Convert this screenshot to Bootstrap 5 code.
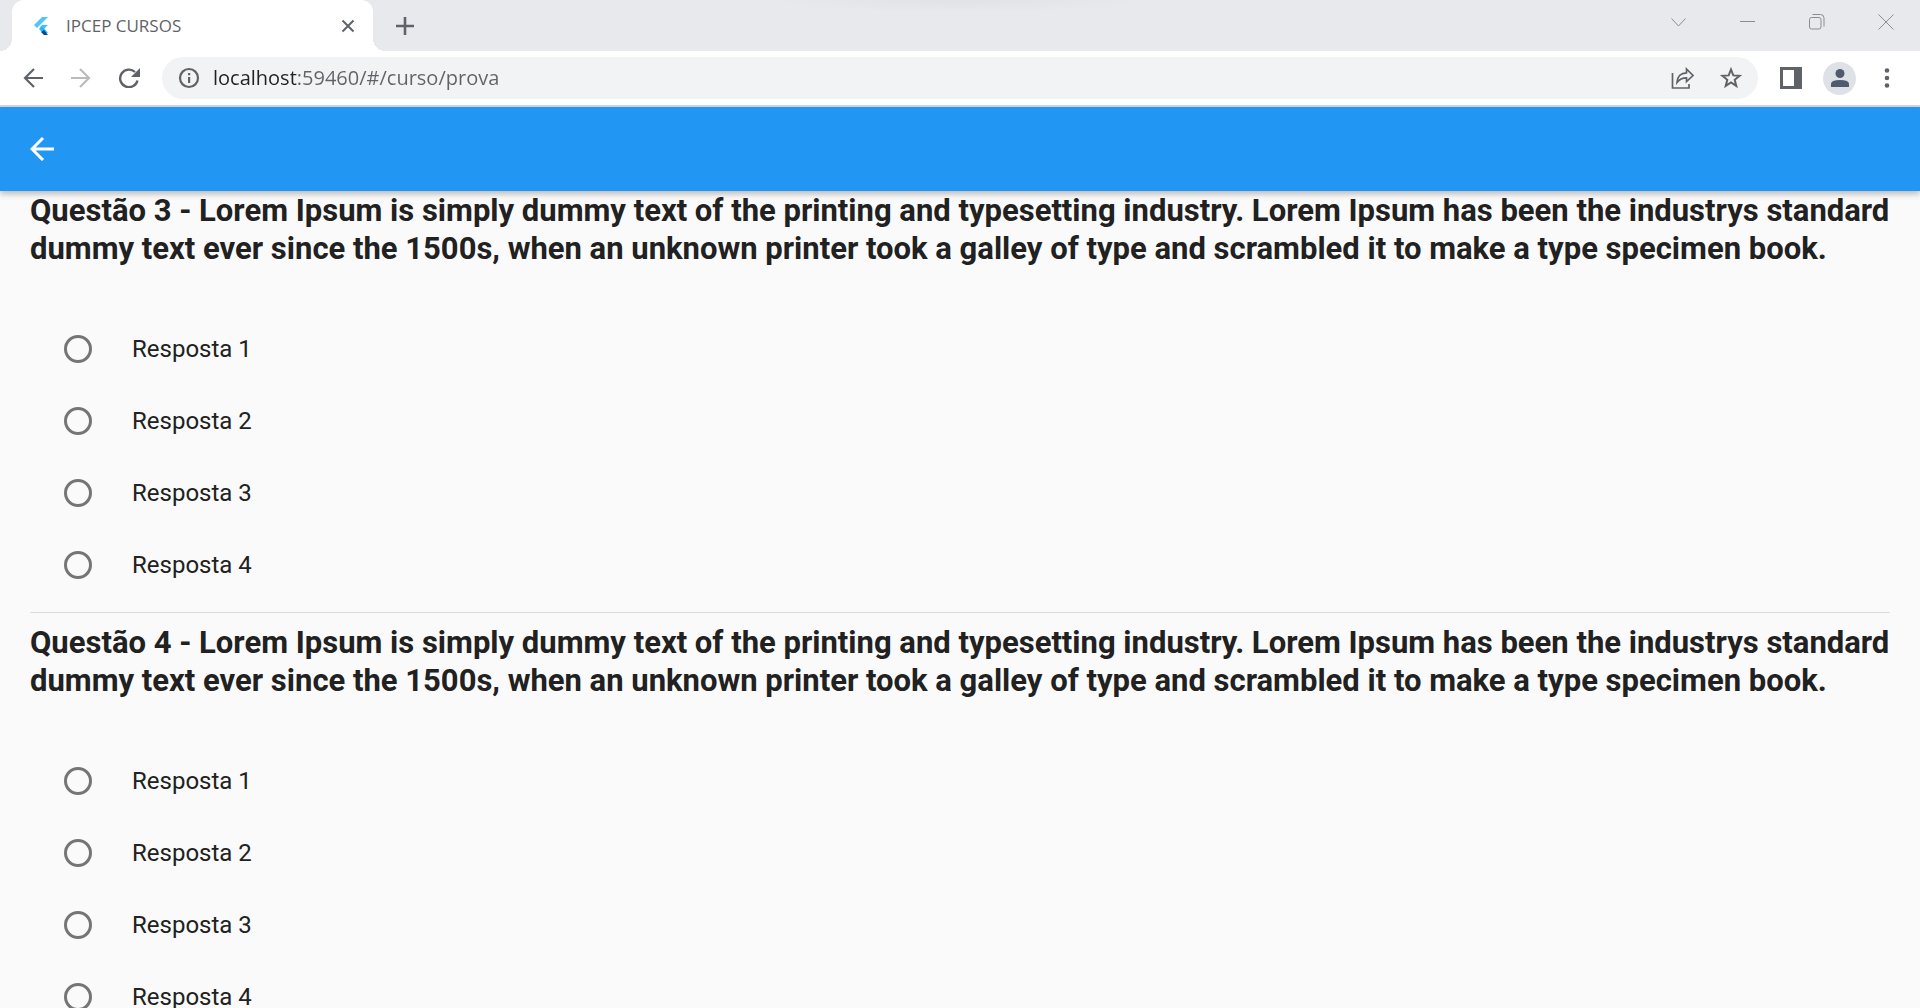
<!DOCTYPE html>
<html lang="pt-BR">
<head>
<meta charset="utf-8">
<meta name="viewport" content="width=device-width, initial-scale=1">
<title>IPCEP CURSOS</title>
<link href="https://cdn.jsdelivr.net/npm/bootstrap@5.3.0/dist/css/bootstrap.min.css" rel="stylesheet">
<style>
  body { font-family: Roboto, "Liberation Sans", sans-serif; background: #fafafa; color: #212121; }
  button svg, .site-info svg { display: block; }
  .plain-btn { background: none; border: 0; padding: 0; color: #5f6368; display: flex; align-items: center; justify-content: center; }

  /* Browser window */
  .tab-strip { height: 51px; background: radial-gradient(190px 12px at 50% 0, #e1e2e6, #e8e9ed); padding-left: 12px; }
  .browser-tab { position: relative; width: 361px; background: #fff; border-radius: 12px 12px 0 0; padding: 0 18px 0 20px; color: #5f6368; font: 17px/24px "Open Sans", sans-serif; }
  .browser-tab::before, .browser-tab::after { content: ""; position: absolute; bottom: 0; width: 12px; height: 12px; }
  .browser-tab::before { right: 100%; background: radial-gradient(circle at 0 0, transparent 12px, #fff 12px); }
  .browser-tab::after { left: 100%; background: radial-gradient(circle at 100% 0, transparent 12px, #fff 12px); }
  .new-tab { width: 64px; }
  .window-btn { width: 69px; height: 43px; color: #8b8d91; }
  .toolbar { height: 56px; background: #fff; border-bottom: 2px solid #d5d7da; padding: 0 15px; }
  .nav-group { margin-right: 15px; }
  .nav-btn { width: 36px; height: 36px; }
  .address { height: 42px; border-radius: 21px; background: #f1f3f4; color: #5f6368; padding: 0 15px 0 16px; }
  .address-input { border: 0; outline: 0; background: linear-gradient(90deg, #202124 84px, #5f6368 84px); background-clip: text; -webkit-background-clip: text; -webkit-text-fill-color: transparent; color: #5f6368; margin: 0 16px 0 13px; padding: 0; font: 20px/28px "Open Sans", sans-serif; }
  .side-panel { margin: 0 21px 0 22px; }
  .avatar { width: 33px; height: 33px; border-radius: 50%; background: #dee1e6; color: #505b70; }
  .browser-menu { margin-left: 13px; }

  /* App */
  .app-bar { height: 84px; background: #2196f3; padding-left: 24px; box-shadow: 0 3px 6px rgba(0,0,0,.26); z-index: 1; }
  .quiz { scrollbar-width: none; min-height: 0; padding: 1px 30px 0; }
  .quiz::-webkit-scrollbar { display: none; }
  .question-title { font-size: 31px; line-height: 38px; font-weight: 700; margin-bottom: 45px; }
  .answer { height: 72px; padding-left: 34px; font-size: 24px; line-height: 28px; }
  .answer .form-check-input { width: 28px; height: 28px; margin: 0 40px 0 0; border: 3px solid #757575; background-color: transparent; }
  .divider { height: 23px; }
  .divider hr { opacity: 1; border-top: 1px solid #dcdcdc; }
</style>
<script src="https://cdn.jsdelivr.net/npm/bootstrap@5.3.0/dist/js/bootstrap.bundle.min.js"></script>
</head>
<body class="vh-100 d-flex flex-column overflow-hidden">

<div class="tab-strip d-flex flex-shrink-0 align-items-stretch">
  <div class="browser-tab d-flex align-items-center">
    <svg class="me-3" width="18" height="20" viewBox="0 0 18 20" aria-hidden="true">
      <path d="M10 1h6L5 12l-3-3z" fill="#54c5f8"/><path d="M10 9h6l-5 5-3-3z" fill="#40c4ff"/><path d="M7 13l3-3 6 7h-5z" fill="#29b6f6"/><path d="M9 16l3-2 4 5h-4z" fill="#01479b"/>
    </svg>
    <span class="flex-grow-1">IPCEP CURSOS</span>
    <button class="plain-btn" type="button" aria-label="Fechar guia"><svg width="14" height="14" viewBox="0 0 14 14" stroke="currentColor" stroke-width="2"><path d="M1.500 1.500l11 11M12.500 1.500l-11 11"/></svg></button>
  </div>
  <button class="plain-btn new-tab" type="button" aria-label="Nova guia"><svg width="18" height="18" viewBox="0 0 18 18" stroke="currentColor" stroke-width="2.600"><path d="M9 0v18M0 9h18"/></svg></button>
  <div class="d-flex ms-auto">
    <button class="plain-btn window-btn" type="button" aria-label="Pesquisar guias"><svg width="16" height="16" viewBox="0 0 16 16" fill="none" stroke="currentColor"><path d="M.5 4.500l7 7.500 7-7.500"/></svg></button>
    <button class="plain-btn window-btn" type="button" aria-label="Minimizar"><svg width="16" height="16" viewBox="0 0 16 16" stroke="currentColor"><path d="M0 7.500h15"/></svg></button>
    <button class="plain-btn window-btn" type="button" aria-label="Restaurar"><svg width="16" height="16" viewBox="0 0 16 16" fill="none" stroke="currentColor"><rect x=".5" y="3.500" width="11.500" height="11.500" rx="2"/><path d="M3.500 .5h8q3.500 0 3.500 3.500v8.500"/></svg></button>
    <button class="plain-btn window-btn" type="button" aria-label="Fechar"><svg width="16" height="16" viewBox="0 0 16 16" stroke="currentColor"><path d="M.5.5l15 15M15.500.5l-15 15"/></svg></button>
  </div>
</div>

<div class="toolbar d-flex flex-shrink-0 align-items-center">
  <div class="nav-group d-flex gap-2 align-items-center">
    <button class="plain-btn nav-btn me-1" type="button" aria-label="Voltar"><svg width="20" height="20" viewBox="0 0 20 20" fill="none" stroke="currentColor" stroke-width="2.200"><path d="M20 10H2M11 1l-9 9 9 9"/></svg></button>
    <button class="plain-btn nav-btn me-1" type="button" aria-label="Avançar"><svg width="20" height="20" viewBox="0 0 20 20" fill="none" stroke="#b9bbbe" stroke-width="2.200"><path d="M0 10h18M9 1l9 9-9 9"/></svg></button>
    <button class="plain-btn nav-btn" type="button" aria-label="Recarregar"><svg width="22" height="20" viewBox="0 0 22 20"><path d="M19.500 12.500A8.800 8.800 0 1 1 17 4" fill="none" stroke="currentColor" stroke-width="2.400"/><path d="M22 0v9h-9z" fill="currentColor"/></svg></button>
  </div>
  <div class="address d-flex flex-grow-1 align-items-center">
    <span class="site-info"><svg width="22" height="22" viewBox="0 0 22 22"><circle cx="11" cy="11" r="9" fill="none" stroke="currentColor" stroke-width="2.200"/><path d="M10 10h2.200v6H10zM10 6h2.200v2.200H10z" fill="currentColor"/></svg></span>
    <input class="address-input flex-grow-1" type="text" aria-label="Endereço" value="localhost:59460/#/curso/prova">
    <button class="plain-btn me-4" type="button" aria-label="Compartilhar"><svg width="24" height="22" viewBox="0 0 24 22" fill="none" stroke="currentColor" stroke-width="1.700"><path d="M1.500 6v15H18v-4M6 15.500C6.200 9.500 10 6 15.500 5.800V2L22 8.500l-6.500 6V10.800C11 10.800 8.500 12 6 15.500z"/></svg></button>
    <button class="plain-btn" type="button" aria-label="Favoritar"><svg width="24" height="24" viewBox="0 0 24 24"><path d="M12 3.500l2.300 5.900 6.300.4-4.900 4 1.600 6.100-5.300-3.400-5.300 3.400 1.600-6.100-4.900-4 6.300-.4z" fill="none" stroke="currentColor" stroke-width="2"/></svg></button>
  </div>
  <button class="plain-btn side-panel" type="button" aria-label="Painel lateral"><svg width="22" height="22" viewBox="0 0 22 22"><path d="M0 0h22v22H0zM3 3v16h11V3z" fill="currentColor" fill-rule="evenodd"/></svg></button>
  <button class="plain-btn avatar" type="button" aria-label="Perfil"><svg width="20" height="20" viewBox="0 0 20 20" fill="currentColor"><circle cx="10" cy="5.500" r="4.500"/><path d="M1 19v-3q0-4 9-4t9 4v3z"/></svg></button>
  <button class="plain-btn nav-btn browser-menu" type="button" aria-label="Menu"><svg width="6" height="22" viewBox="0 0 6 22" fill="currentColor"><circle cx="3" cy="3.500" r="2.300"/><circle cx="3" cy="11" r="2.300"/><circle cx="3" cy="18.500" r="2.300"/></svg></button>
</div>

<header class="app-bar d-flex flex-shrink-0 align-items-center position-relative">
  <button class="plain-btn nav-btn text-white" type="button" aria-label="Voltar à página anterior"><svg width="24" height="24" viewBox="0 0 24 24" fill="none" stroke="currentColor" stroke-width="3"><path d="M24 12H2.500M13 1L2 12l11 11"/></svg></button>
</header>

<main class="quiz flex-grow-1 overflow-auto">
  <fieldset>
    <legend class="question-title">Questão 3 - Lorem Ipsum is simply dummy text of the printing and typesetting industry. Lorem Ipsum has been the industrys standard dummy text ever since the 1500s, when an unknown printer took a galley of type and scrambled it to make a type specimen book.</legend>
    <label class="answer d-flex align-items-center"><input class="form-check-input" type="radio" name="q3" value="1">Resposta 1</label>
    <label class="answer d-flex align-items-center"><input class="form-check-input" type="radio" name="q3" value="2">Resposta 2</label>
    <label class="answer d-flex align-items-center"><input class="form-check-input" type="radio" name="q3" value="3">Resposta 3</label>
    <label class="answer d-flex align-items-center"><input class="form-check-input" type="radio" name="q3" value="4">Resposta 4</label>
  </fieldset>
  <div class="divider d-flex align-items-center"><hr class="w-100 m-0"></div>
  <fieldset>
    <legend class="question-title">Questão 4 - Lorem Ipsum is simply dummy text of the printing and typesetting industry. Lorem Ipsum has been the industrys standard dummy text ever since the 1500s, when an unknown printer took a galley of type and scrambled it to make a type specimen book.</legend>
    <label class="answer d-flex align-items-center"><input class="form-check-input" type="radio" name="q4" value="1">Resposta 1</label>
    <label class="answer d-flex align-items-center"><input class="form-check-input" type="radio" name="q4" value="2">Resposta 2</label>
    <label class="answer d-flex align-items-center"><input class="form-check-input" type="radio" name="q4" value="3">Resposta 3</label>
    <label class="answer d-flex align-items-center"><input class="form-check-input" type="radio" name="q4" value="4">Resposta 4</label>
  </fieldset>
</main>
</body>
</html>
